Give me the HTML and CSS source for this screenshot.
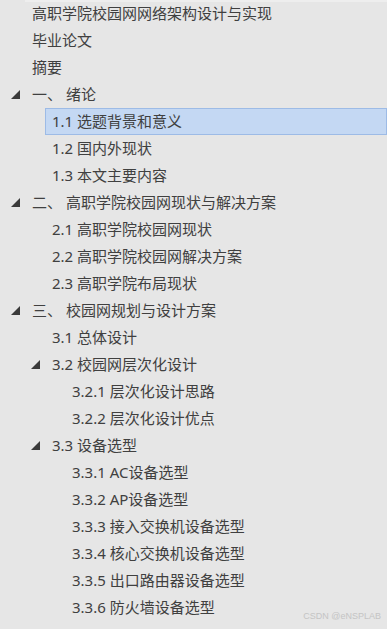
FILE: index.html
```html
<!DOCTYPE html>
<html lang="zh-CN">
<head>
  <meta charset="UTF-8">
  <meta name="viewport" content="width=device-width, initial-scale=1.0">
  <title>导航窗格</title>
  <link rel="stylesheet" href="styles.css">
</head>
<body>

  <div class="nav-pane">
    <div class="top-strip"></div>

    <ul class="outline">
      <li class="row lv0"><span class="toggle"></span><span class="label">高职学院校园网网络架构设计与实现</span></li>
      <li class="row lv0"><span class="toggle"></span><span class="label">毕业论文</span></li>
      <li class="row lv0"><span class="toggle"></span><span class="label">摘要</span></li>
      <li class="row lv0"><span class="toggle"><svg viewBox="0 0 9 9"><polygon points="9,0 9,9 0,9"/></svg></span><span class="label">一、 绪论</span></li>
      <li class="row lv1"><span class="toggle"></span><span class="label selected">1.1 选题背景和意义</span></li>
      <li class="row lv1"><span class="toggle"></span><span class="label">1.2 国内外现状</span></li>
      <li class="row lv1"><span class="toggle"></span><span class="label">1.3 本文主要内容</span></li>
      <li class="row lv0"><span class="toggle"><svg viewBox="0 0 9 9"><polygon points="9,0 9,9 0,9"/></svg></span><span class="label">二、 高职学院校园网现状与解决方案</span></li>
      <li class="row lv1"><span class="toggle"></span><span class="label">2.1 高职学院校园网现状</span></li>
      <li class="row lv1"><span class="toggle"></span><span class="label">2.2 高职学院校园网解决方案</span></li>
      <li class="row lv1"><span class="toggle"></span><span class="label">2.3 高职学院布局现状</span></li>
      <li class="row lv0"><span class="toggle"><svg viewBox="0 0 9 9"><polygon points="9,0 9,9 0,9"/></svg></span><span class="label">三、 校园网规划与设计方案</span></li>
      <li class="row lv1"><span class="toggle"></span><span class="label">3.1 总体设计</span></li>
      <li class="row lv1"><span class="toggle"><svg viewBox="0 0 9 9"><polygon points="9,0 9,9 0,9"/></svg></span><span class="label">3.2 校园网层次化设计</span></li>
      <li class="row lv2"><span class="toggle"></span><span class="label">3.2.1 层次化设计思路</span></li>
      <li class="row lv2"><span class="toggle"></span><span class="label">3.2.2 层次化设计优点</span></li>
      <li class="row lv1"><span class="toggle"><svg viewBox="0 0 9 9"><polygon points="9,0 9,9 0,9"/></svg></span><span class="label">3.3 设备选型</span></li>
      <li class="row lv2"><span class="toggle"></span><span class="label">3.3.1 AC设备选型</span></li>
      <li class="row lv2"><span class="toggle"></span><span class="label">3.3.2 AP设备选型</span></li>
      <li class="row lv2"><span class="toggle"></span><span class="label">3.3.3 接入交换机设备选型</span></li>
      <li class="row lv2"><span class="toggle"></span><span class="label">3.3.4 核心交换机设备选型</span></li>
      <li class="row lv2"><span class="toggle"></span><span class="label">3.3.5 出口路由器设备选型</span></li>
      <li class="row lv2"><span class="toggle"></span><span class="label">3.3.6 防火墙设备选型</span></li>
    </ul>

    <div class="watermark">CSDN @eNSPLAB</div>
  </div>

</body>
</html>
```

FILE: styles.css
```css
body {
  margin: 0;
  background-color: #e6e6e6;
  font-family: "Noto Sans", "Noto Sans CJK SC", sans-serif;
  color: #404040;
}

.nav-pane {
  position: relative;
  width: 387px;
  height: 629px;
  overflow: hidden;
}

.top-strip {
  position: absolute;
  top: 0;
  left: 25px;
  right: 0;
  height: 2px;
  background-color: #eeeeee;
}

.outline {
  list-style: none;
  margin: 0;
  padding: 0;
}

.row {
  display: flex;
  align-items: stretch;
  height: 27px;
  font-size: 15px;
  white-space: nowrap;
}

.lv1 {
  padding-left: 20px;
}

.lv2 {
  padding-left: 40px;
}

.toggle {
  display: flex;
  align-items: center;
  flex: 0 0 25px;
}

.toggle svg {
  width: 9px;
  height: 9px;
  margin-left: 11px;
  fill: #3a3a3a;
}

.label {
  flex: 1;
  display: flex;
  align-items: center;
  padding: 0 6px 1px;
  border: 1px solid transparent;
  line-height: 1;
}

.label.selected {
  background-color: #c4d8f3;
  border-color: #9dbbe6;
}

.watermark {
  position: absolute;
  right: 6px;
  bottom: 8px;
  font-family: "Liberation Sans", Arial, sans-serif;
  font-size: 9px;
  color: #c4c4c4;
}
```
